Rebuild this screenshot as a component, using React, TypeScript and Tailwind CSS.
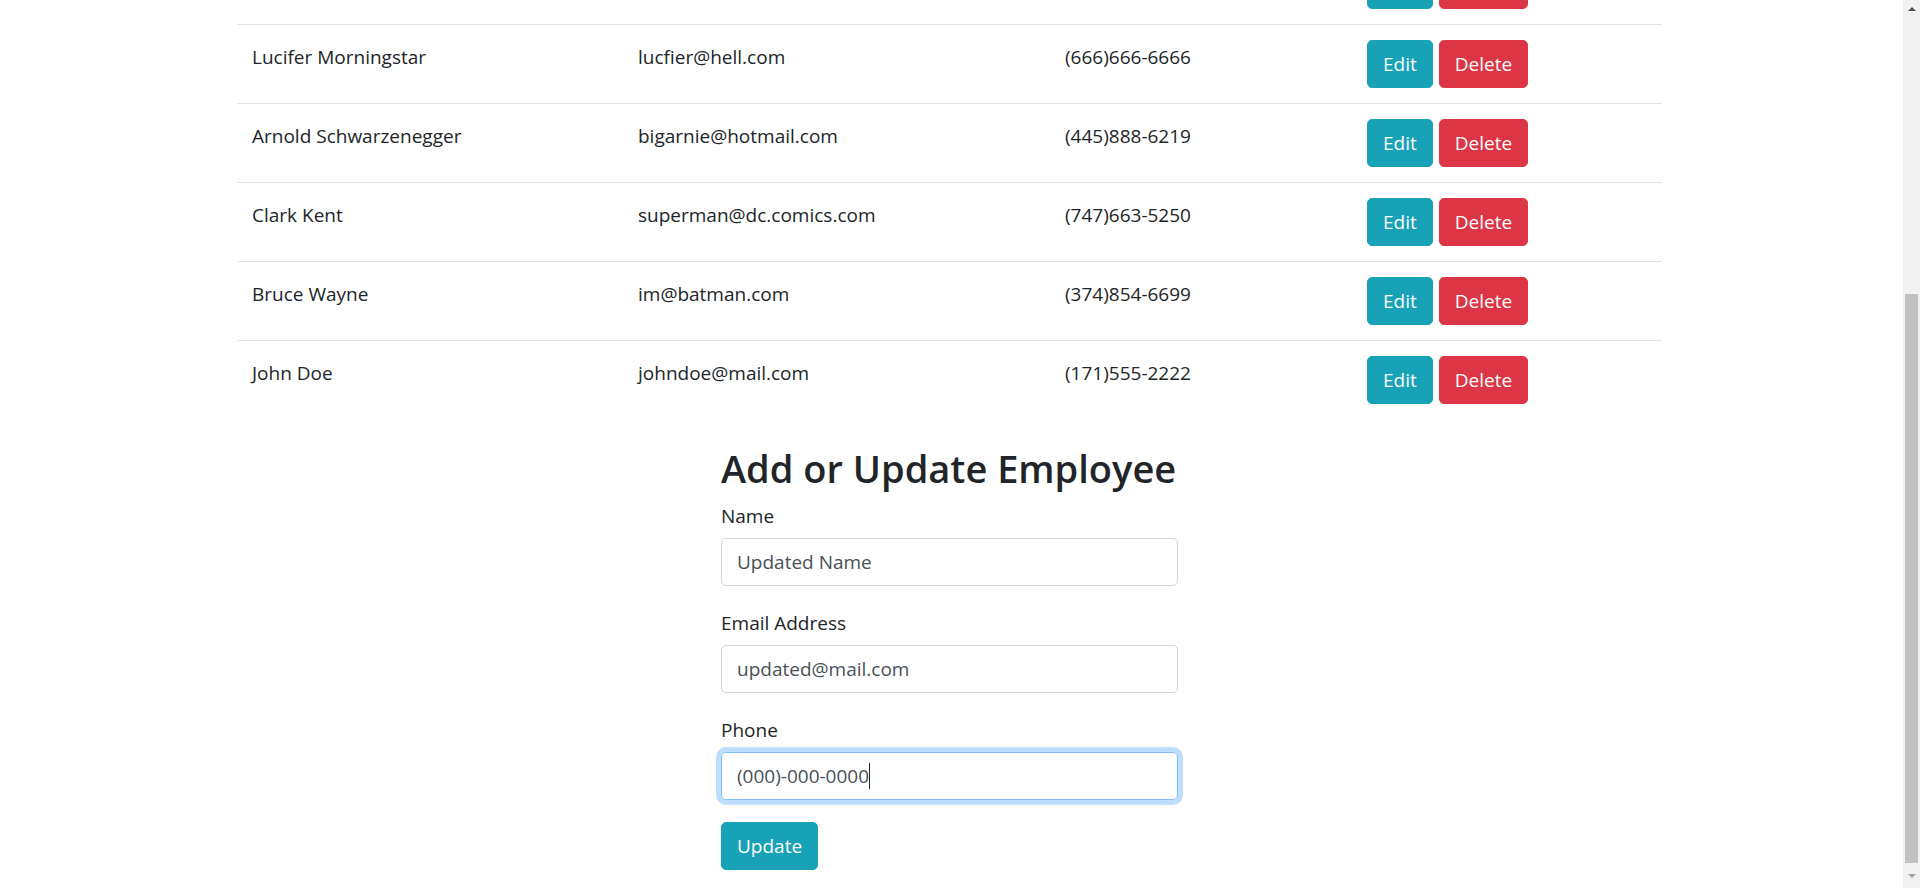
import React from 'react';

const employees = [
  { name: 'Tony Stark', email: 'tony@stark.com', phone: '(212)970-4133' },
  { name: 'Lucifer Morningstar', email: 'lucfier@hell.com', phone: '(666)666-6666' },
  { name: 'Arnold Schwarzenegger', email: 'bigarnie@hotmail.com', phone: '(445)888-6219' },
  { name: 'Clark Kent', email: 'superman@dc.comics.com', phone: '(747)663-5250' },
  { name: 'Bruce Wayne', email: 'im@batman.com', phone: '(374)854-6699' },
  { name: 'John Doe', email: 'johndoe@mail.com', phone: '(171)555-2222' },
];

const cell = 'px-[15px] pt-[17px] pb-[15px] align-top text-left font-normal';
const btn = 'rounded-[5px] border px-[15px] py-[8px] text-[19px] leading-[30px] text-white';
const input =
  'block h-[47.5px] w-full rounded-[5px] border border-[#ced4da] px-[15px] py-[7.5px] text-[19px] leading-[30px] text-[#495057] outline-none';

export default function App() {
  return (
    <div
      className="flex h-[888px] w-full overflow-hidden bg-white text-[19px] leading-[30px] text-[#212529]"
      style={{ fontFamily: '"Open Sans", "Noto Sans", sans-serif' }}
    >
      {/* Page content */}
      <div className="flex-1 overflow-hidden">
        {/* table, scrolled so the first row is mostly off screen */}
        <table className="ml-[237px] mt-[-54px] mb-[25px] w-[1425px] table-fixed border-collapse">
          <colgroup>
            <col className="w-[386px]" />
            <col className="w-[427px]" />
            <col className="w-[302px]" />
            <col />
          </colgroup>
          <tbody>
            {employees.map((emp) => (
              <tr key={emp.email} className="border-t border-[#dee2e6] first:border-t-0">
                <td className={cell}>{emp.name}</td>
                <td className={cell}>{emp.email}</td>
                <td className={cell}>{emp.phone}</td>
                <td className="px-[15px] py-[15px] align-top">
                  <div className="flex gap-[6px]">
                    <button className={`${btn} border-[#17a2b8] bg-[#17a2b8]`}>Edit</button>
                    <button className={`${btn} border-[#dc3545] bg-[#dc3545]`}>Delete</button>
                  </div>
                </td>
              </tr>
            ))}
          </tbody>
        </table>

        {/* Form */}
        <div className="ml-[721px] w-[457px]">
          <h2 className="mb-[8.5px] whitespace-nowrap text-[38px] font-semibold leading-[48px]">Add or Update Employee</h2>

          <div className="mb-[22px]">
            <label className="mb-[7.5px] block">Name</label>
            <input readOnly value="Updated Name" className={input} />
          </div>

          <div className="mb-[22px]">
            <label className="mb-[7.5px] block">Email Address</label>
            <input readOnly value="updated@mail.com" className={input} />
          </div>

          <div className="mb-[22px]">
            <label className="mb-[7.5px] block">Phone</label>
            {/* focused field */}
            <div className="flex h-[47.5px] w-full items-center rounded-[5px] border border-[#80bdff] px-[15px] text-[#495057] shadow-[0_0_0_5px_rgba(0,123,255,0.25)]">
              <span>(000)-000-0000</span>
              <span className="h-[26px] w-px bg-[#212529]" />
            </div>
          </div>

          <button className={`${btn} border-[#17a2b8] bg-[#17a2b8]`}>Update</button>
        </div>
      </div>

      {/* Scrollbar */}
      <div className="flex w-[17px] flex-col bg-[#f1f1f1]">
        <div className="flex h-[17px] items-center justify-center">
          <div className="h-0 w-0 border-x-[4px] border-b-[4px] border-x-transparent border-b-[#505050]" />
        </div>
        <div className="mx-[2px] mt-[277px] h-[569px] bg-[#c1c1c1]" />
        <div className="flex flex-1 items-center justify-center">
          <div className="h-0 w-0 border-x-[4px] border-t-[4px] border-x-transparent border-t-[#a3a3a3]" />
        </div>
      </div>
    </div>
  );
}
